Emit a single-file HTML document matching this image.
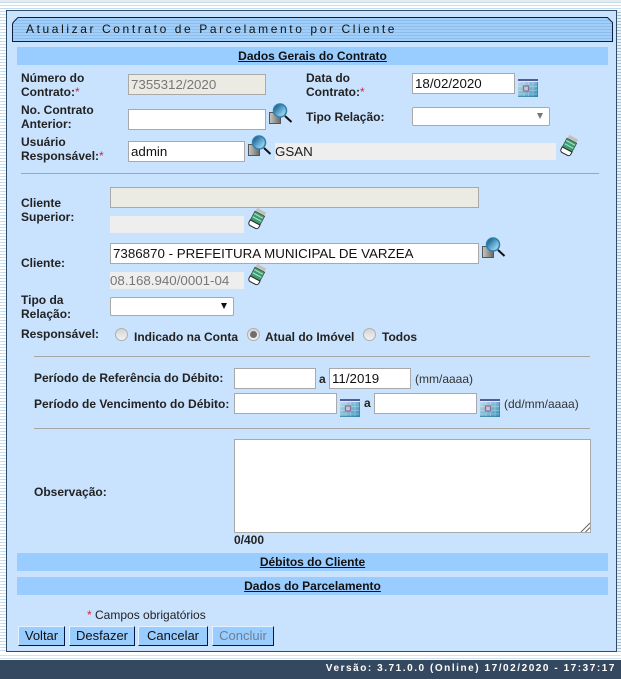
<!DOCTYPE html>
<html><head><meta charset="utf-8"><style>
*{box-sizing:border-box}
html,body{margin:0;padding:0}
body{width:621px;height:679px;position:relative;overflow:hidden;font-family:"Liberation Sans",Arial,sans-serif;font-size:12px;color:#1c1c1c;background:#fff repeating-linear-gradient(to bottom,#fff 0,#fff 2px,#c4dcef 2px,#c4dcef 3px)}
.a{position:absolute}
.l{position:absolute;font-weight:bold;font-size:12px;line-height:14px;white-space:nowrap;color:#222}
.r{color:#e0203c;font-weight:normal}
.i{position:absolute;background:#fff;border:1px solid #a9a9a9;font-size:13.33px;line-height:19px;padding-left:2px;color:#111;white-space:nowrap;overflow:hidden}
.d{background:#ebebe4;color:#777}
.b{position:absolute;background:#eee;font-size:13.33px;line-height:17px;white-space:nowrap;overflow:hidden}
.bar{position:absolute;left:17px;width:591px;height:18px;background:#99ccff;text-align:center;font-weight:bold;font-size:12px;line-height:18px;text-decoration:underline;color:#111}
.hr{position:absolute;height:1px;background:#a5a5a5}
.s{position:absolute;background:#fff;border:1px solid #a9a9a9;border-radius:2px}
.btn{position:absolute;top:626px;height:20px;background:#99ccff;border:1px solid;border-color:#e4f1ff #00194d #00194d #e4f1ff;font-size:13px;line-height:18px;text-align:center;color:#111}
.rd{position:absolute;width:13px;height:13px;border-radius:50%;background:linear-gradient(#d4d4d4,#f2f2f2);border:1px solid #b0b0b0}
svg{position:absolute;overflow:visible}
</style></head><body>
<svg width="0" height="0" style="position:absolute"><defs>
<linearGradient id="cg" x1="0" y1="0" x2="1" y2="1"><stop offset="0" stop-color="#cfe3ee"/><stop offset="1" stop-color="#2f8fba"/></linearGradient>
<linearGradient id="lg" x1="0" y1="0" x2="1" y2="1"><stop offset="0" stop-color="#0d3f60"/><stop offset=".5" stop-color="#5aa6cf"/><stop offset="1" stop-color="#d8eefa"/></linearGradient>
<linearGradient id="dg" x1="0" y1="0" x2="1" y2="0"><stop offset="0" stop-color="#c8c8c4"/><stop offset="1" stop-color="#666663"/></linearGradient>
<symbol id="lupa" viewBox="0 0 23 21" overflow="visible">
<rect x="0.500" y="9.500" width="11" height="11" fill="url(#dg)" stroke="#555"/>
<path d="M16 13l6.500 6" stroke="#111" stroke-width="2" fill="none"/>
<circle cx="11" cy="7.500" r="6.500" fill="url(#lg)" stroke="#2f7fae" stroke-width="1.500"/>
</symbol>
<symbol id="cal" viewBox="0 0 20 18" overflow="visible">
<rect width="20" height="18" fill="url(#cg)"/><rect width="20" height="2" fill="#55589a"/><rect y="2" width="20" height="1" fill="#e8e8f4"/>
<path d="M0 7.500h20M0 11.500h20M0 15h20M6 3v15M10.500 3v15M15 3v15" stroke="#fff" stroke-opacity=".28" stroke-width="1"/>
<rect x="5.500" y="7" width="5" height="5" fill="#c6c6d8" stroke="#8a6f96" stroke-width="1.200"/>
<path d="M19.500 3v14.500H0" stroke="#3a7f9f" stroke-opacity=".7" fill="none"/>
</symbol>
<symbol id="er" viewBox="0 0 18 20" overflow="visible">
<g transform="rotate(28 9 10)"><rect x="4" y="0" width="10" height="6" fill="#c2c2bc"/><rect x="3.500" y="4" width="11" height="10" fill="#3a9a70" stroke="#333" stroke-width=".6"/><path d="M4 6.500h10M4 10h10" stroke="#a9dfc2" stroke-width="1.200"/><path d="M3.500 14h11v2.500a2.500 2.500 0 0 1-2.500 2.500H6a2.500 2.500 0 0 1-2.500-2.500z" fill="#fff" stroke="#222" stroke-width="1"/></g>
</symbol>
</defs></svg>

<div class="a" style="left:6px;top:10px;width:611px;height:642px;background:#c9e2fe;border:1px solid #2d4a66"></div>
<div class="a" style="left:617px;top:10px;width:4px;height:642px;background:repeating-linear-gradient(to bottom,#e8f1f7 0,#e8f1f7 2px,#a9c2d0 2px,#a9c2d0 3px)"></div>
<div class="a" style="left:0;top:0;width:621px;height:2px;background:#e8ebee"></div>

<svg style="left:12px;top:17px" width="601" height="25" viewBox="0 0 601 25">
<defs><pattern id="st" width="3" height="3" patternUnits="userSpaceOnUse"><rect width="3" height="3" fill="#a2cff8"/><rect width="3" height="1" fill="#8dbdee"/></pattern></defs>
<path d="M.5 24.500V7.500Q.5 6 2 4.500L6 .5H595.500L600.500 5.500V24.500Z" fill="url(#st)" stroke="#0c1e3c"/>
</svg>
<div class="a" style="left:26px;top:22px;font-size:12px;line-height:14px;letter-spacing:2.6px;color:#111;white-space:nowrap">Atualizar Contrato de Parcelamento por Cliente</div>

<div class="bar" style="top:47px">Dados Gerais do Contrato</div>

<div class="l" style="left:21px;top:71px">Número do<br>Contrato:<span class="r">*</span></div>
<div class="i d" style="left:128px;top:74px;width:138px;height:21px">7355312/2020</div>
<div class="l" style="left:306px;top:71px">Data do<br>Contrato:<span class="r">*</span></div>
<div class="i" style="left:412px;top:73px;width:103px;height:21px">18/02/2020</div>
<svg style="left:518px;top:79px" width="20" height="18"><use href="#cal"/></svg>

<div class="l" style="left:21px;top:103px">No. Contrato<br>Anterior:</div>
<div class="i" style="left:128px;top:109px;width:138px;height:21px"></div>
<svg style="left:269px;top:103px" width="23" height="21"><use href="#lupa"/></svg>
<div class="l" style="left:306px;top:110px">Tipo Relação:</div>
<div class="s" style="left:412px;top:107px;width:138px;height:19px"></div>
<div class="a" style="left:537px;top:113px;width:0;height:0;border:3px solid transparent;border-top:6px solid #777;border-bottom:0"></div>

<div class="l" style="left:21px;top:135px">Usuário<br>Responsável:<span class="r">*</span></div>
<div class="i" style="left:128px;top:141px;width:117px;height:21px">admin</div>
<svg style="left:248px;top:135px" width="23" height="21"><use href="#lupa"/></svg>
<div class="b" style="left:275px;top:143px;width:281px;height:17px">GSAN</div>
<svg style="left:560px;top:136px" width="18" height="20"><use href="#er"/></svg>

<div class="hr" style="left:21px;top:173px;width:578px"></div>

<div class="l" style="left:21px;top:196px">Cliente<br>Superior:</div>
<div class="i d" style="left:110px;top:187px;width:369px;height:21px"></div>
<div class="b" style="left:110px;top:216px;width:134px;height:17px"></div>
<svg style="left:248px;top:209px" width="18" height="20"><use href="#er"/></svg>

<div class="l" style="left:21px;top:256px">Cliente:</div>
<div class="i" style="left:110px;top:243px;width:369px;height:21px">7386870 - PREFEITURA MUNICIPAL DE VARZEA</div>
<svg style="left:482px;top:237px" width="23" height="21"><use href="#lupa"/></svg>
<div class="b" style="left:110px;top:272px;width:134px;height:17px;color:#777">08.168.940/0001-04</div>
<svg style="left:248px;top:265px" width="18" height="20"><use href="#er"/></svg>

<div class="l" style="left:21px;top:293px">Tipo da<br>Relação:</div>
<div class="s" style="left:110px;top:297px;width:124px;height:19px"></div>
<div class="a" style="left:221px;top:303px;width:0;height:0;border:3px solid transparent;border-top:6px solid #111;border-bottom:0"></div>

<div class="l" style="left:21px;top:327px">Responsável:</div>
<div class="rd" style="left:115px;top:328px"></div>
<div class="l" style="left:134px;top:330px">Indicado na Conta</div>
<div class="rd" style="left:247px;top:328px"></div>
<div class="a" style="left:250px;top:331px;width:7px;height:7px;border-radius:50%;background:#6f6f6f"></div>
<div class="l" style="left:265px;top:330px">Atual do Imóvel</div>
<div class="rd" style="left:363px;top:328px"></div>
<div class="l" style="left:382px;top:330px">Todos</div>

<div class="hr" style="left:34px;top:356px;width:556px"></div>

<div class="l" style="left:34px;top:371px">Período de Referência do Débito:</div>
<div class="i" style="left:234px;top:368px;width:82px;height:21px"></div>
<div class="l" style="left:319px;top:372px">a</div>
<div class="i" style="left:329px;top:368px;width:82px;height:21px">11/2019</div>
<div class="a" style="left:415px;top:372px;font-size:12px;line-height:14px;color:#333;white-space:nowrap">(mm/aaaa)</div>

<div class="l" style="left:34px;top:397px">Período de Vencimento do Débito:</div>
<div class="i" style="left:234px;top:393px;width:103px;height:21px"></div>
<svg style="left:340px;top:399px" width="20" height="18"><use href="#cal"/></svg>
<div class="l" style="left:364px;top:396px">a</div>
<div class="i" style="left:374px;top:393px;width:103px;height:21px"></div>
<svg style="left:480px;top:399px" width="20" height="18"><use href="#cal"/></svg>
<div class="a" style="left:504px;top:397px;font-size:12px;line-height:14px;color:#333;white-space:nowrap">(dd/mm/aaaa)</div>

<div class="hr" style="left:34px;top:428px;width:556px"></div>

<div class="l" style="left:34px;top:485px">Observação:</div>
<div class="i" style="left:234px;top:439px;width:357px;height:94px"></div>
<svg style="left:581px;top:523px" width="9" height="9"><path d="M0 9L9 0M4.500 9L9 4.500" stroke="#666" fill="none"/></svg>
<div class="l" style="left:234px;top:533px">0/400</div>

<div class="bar" style="top:553px">Débitos do Cliente</div>
<div class="bar" style="top:577px">Dados do Parcelamento</div>

<div class="a" style="left:87px;top:608px;font-size:12px;line-height:14px;color:#222;white-space:nowrap"><span class="r">*</span> Campos obrigatórios</div>

<div class="btn" style="left:18px;width:47px">Voltar</div>
<div class="btn" style="left:69px;width:66px">Desfazer</div>
<div class="btn" style="left:138px;width:70px">Cancelar</div>
<div class="btn" style="left:212px;width:62px;color:#6f7f90">Concluir</div>

<div class="a" style="left:0;top:652px;width:621px;height:8px;background:#fff"></div>
<div class="a" style="left:0;top:655px;width:621px;height:1px;background:#cfe3f3"></div>
<div class="a" style="left:0;top:658px;width:621px;height:1px;background:#cfe3f3"></div>
<div class="a" style="left:0;top:660px;width:621px;height:19px;background:#34495f"></div>
<div class="a" style="right:5px;top:663px;font-size:10px;font-weight:bold;line-height:12px;letter-spacing:1.55px;color:#fff;white-space:nowrap">Versão: 3.71.0.0 (Online) 17/02/2020 - 17:37:17</div>
</body></html>
